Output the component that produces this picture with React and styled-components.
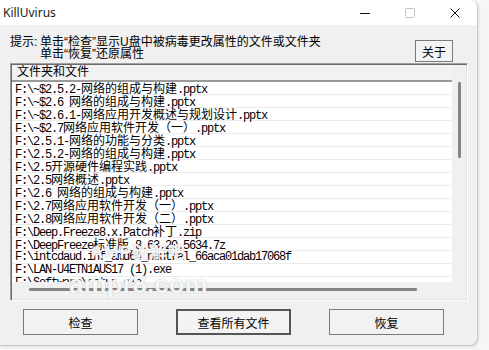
import React from 'react';
import styled, { createGlobalStyle } from 'styled-components';

const GlobalStyle = createGlobalStyle`
  html, body { margin: 0; padding: 0; background: #f6f6f6; }
  body {
    width: 489px; height: 350px; overflow: hidden;
    font-family: "Liberation Sans", "Noto Sans CJK SC", sans-serif;
  }
`;

const Window = styled.div`
  position: relative;
  width: 478px;
  height: 346px;
  box-sizing: border-box;
  background: #f0f0f0;
  border-right: 1px solid #c9c9c9;
  border-bottom: 1px solid #c9c9c9;
  border-radius: 0 8px 8px 0;
  overflow: hidden;
  display: flex;
  flex-direction: column;
  box-shadow: 1px 1px 3px rgba(0, 0, 0, 0.10);
`;

const TitleBar = styled.div`
  height: 25px;
  flex: none;
  background: #ffffff;
  display: flex;
  align-items: center;
`;

const Title = styled.div`
  flex: 1;
  padding-left: 3px;
  font-family: "Noto Sans", "Open Sans", sans-serif;
  font-size: 12px;
  color: #1a1a1a;
  line-height: 25px;
`;

const Control = styled.div`
  width: 45px;
  height: 25px;
  display: flex;
  align-items: center;
  justify-content: center;
`;

const HintRow = styled.div`
  margin-top: 11px;
  height: 27px;
  display: flex;
  justify-content: space-between;
  align-items: flex-start;
  padding: 0 24px 0 10px;
  flex: none;
`;

const Hint = styled.div`
  display: flex;
  font-size: 12px;
  line-height: 12px;
  color: #000;
`;

const HintLabel = styled.span`
  width: 30px;
  flex: none;
`;

const HintLines = styled.div`
  display: flex;
  flex-direction: column;
  white-space: nowrap;
`;

const SmallButton = styled.button`
  margin-top: 4px;
  width: 38px;
  height: 22px;
  padding: 0;
  box-sizing: border-box;
  background: #f3f3f3;
  border: 1px solid #7a7a7a;
  font-family: "Liberation Sans", "Noto Sans CJK SC", sans-serif;
  font-size: 12px;
  color: #000;
`;

const ListGroup = styled.div`
  position: relative;
  margin-left: 10px;
  width: 458px;
  height: 238px;
  box-sizing: border-box;
  flex: none;
  border-top: 1px solid #a0a0a0;
  border-left: 1px solid #a0a0a0;
  border-right: 1px solid #ffffff;
  border-bottom: 1px solid #ffffff;
  box-shadow: inset 1px 1px 0 #6a6a6a, inset -1px -1px 0 #e3e3e3;
  padding: 1px;
  display: grid;
  grid-template-columns: 1fr 14px;
  grid-template-rows: 1fr 17px;
`;

const ListMain = styled.div`
  display: flex;
  flex-direction: column;
  overflow: hidden;
  min-width: 0;
`;

const Header = styled.div`
  height: 15px;
  flex: none;
  background: #f2f2f2;
  border-bottom: 2px solid #9a9a9a;
  padding-left: 5px;
  font-size: 12px;
  line-height: 15px;
  color: #000;
  white-space: nowrap;
`;

const Rows = styled.div`
  flex: 1;
  background: #ffffff;
  overflow: hidden;
`;

const Row = styled.div`
  height: 13px;
  box-sizing: border-box;
  border-bottom: 1px solid #ececec;
  padding-left: 3px;
  font-family: "Liberation Mono", monospace;
  font-size: 12px;
  letter-spacing: -1.2px;
  line-height: 12px;
  white-space: nowrap;
  color: #000;
`;

const Cjk = styled.span`
  font-family: "Noto Sans CJK SC", sans-serif;
  font-size: 12px;
  letter-spacing: 0;
  line-height: 12px;
`;

const VScroll = styled.div`
  background: #f0f0f0;
  display: flex;
  justify-content: center;
  padding-top: 17px;
`;

const VThumb = styled.div`
  width: 3px;
  height: 76px;
  background: #858585;
  border-radius: 1px;
`;

const HScroll = styled.div`
  background: #f0f0f0;
  padding: 6px 0 0 17px;
`;

const HThumb = styled.div`
  width: 388px;
  height: 3px;
  background: #858585;
  border-radius: 1px;
`;

const Corner = styled.div`
  background: #f0f0f0;
`;

const ButtonRow = styled.div`
  margin-top: 8px;
  display: flex;
  gap: 38px;
  padding-left: 23px;
  flex: none;
`;

const Button = styled.button`
  width: 115px;
  height: 26px;
  padding: 0;
  box-sizing: border-box;
  background: ${(p) => (p.$default ? '#f3f3f3' : '#f2f2f2')};
  border: ${(p) => (p.$default ? '2px solid #555555' : '1px solid #7a7a7a')};
  font-family: "Liberation Sans", "Noto Sans CJK SC", sans-serif;
  font-size: 12px;
  color: #000;
`;

const Watermark = styled.div`
  position: absolute;
  left: 58px;
  top: 178px;
  display: flex;
  flex-direction: column;
  align-items: center;
  pointer-events: none;
  color: rgba(255, 255, 255, 0.92);
  font-family: "Liberation Sans", "Noto Sans CJK SC", sans-serif;
  font-weight: bold;
  text-shadow: 0 0 1px rgba(120, 120, 120, 0.6);
`;

const WmTop = styled.div`
  font-size: 17px;
  line-height: 22px;
  letter-spacing: 1px;
`;

const WmBottom = styled.div`
  margin-top: 6px;
  font-size: 26px;
  line-height: 28px;
`;

const files = [
  'F:\\~$2.5.2-网络的组成与构建.pptx',
  'F:\\~$2.6 网络的组成与构建.pptx',
  'F:\\~$2.6.1-网络应用开发概述与规划设计.pptx',
  'F:\\~$2.7网络应用软件开发（一）.pptx',
  'F:\\2.5.1-网络的功能与分类.pptx',
  'F:\\2.5.2-网络的组成与构建.pptx',
  'F:\\2.5开源硬件编程实践.pptx',
  'F:\\2.5网络概述.pptx',
  'F:\\2.6 网络的组成与构建.pptx',
  'F:\\2.7网络应用软件开发（一）.pptx',
  'F:\\2.8网络应用软件开发（二）.pptx',
  'F:\\Deep.Freeze8.x.Patch补丁.zip',
  'F:\\DeepFreeze标准版_8.63.20.5634.7z',
  'F:\\intcdaud.inf_amd64_neutral_66aca01dab17068f',
  'F:\\LAN-U4ETN1AUS17 (1).exe',
  'F:\\Software\\setup.exe',
];

function splitRuns(text) {
  const parts = [];
  const re = /[\u3000-\u9fff\uff00-\uffef]+/g;
  let last = 0;
  let m;
  while ((m = re.exec(text))) {
    if (m.index > last) parts.push({ cjk: false, s: text.slice(last, m.index) });
    parts.push({ cjk: true, s: m[0] });
    last = m.index + m[0].length;
  }
  if (last < text.length) parts.push({ cjk: false, s: text.slice(last) });
  return parts;
}

function FileRow({ text }) {
  return (
    <Row>
      {splitRuns(text).map((p, i) =>
        p.cjk ? <Cjk key={i}>{p.s}</Cjk> : <span key={i}>{p.s}</span>
      )}
    </Row>
  );
}

export default function App() {
  return (
    <>
      <GlobalStyle />
      <Window>
        <TitleBar>
          <Title>KillUvirus</Title>
          <Control>
            <svg width="10" height="10" viewBox="0 0 10 10">
              <line x1="0" y1="5.5" x2="10" y2="5.5" stroke="#111" strokeWidth="1" />
            </svg>
          </Control>
          <Control>
            <svg width="10" height="10" viewBox="0 0 10 10">
              <rect x="0.5" y="0.5" width="9" height="9" rx="1" fill="none" stroke="#c2c2c2" strokeWidth="1" />
            </svg>
          </Control>
          <Control>
            <svg width="10" height="10" viewBox="0 0 10 10">
              <path d="M0.5 0.5 L9.5 9.5 M9.5 0.5 L0.5 9.5" stroke="#111" strokeWidth="1" />
            </svg>
          </Control>
        </TitleBar>

        <HintRow>
          <Hint>
            <HintLabel>提示:</HintLabel>
            <HintLines>
              <span>单击“检查”显示U盘中被病毒更改属性的文件或文件夹</span>
              <span>单击“恢复”还原属性</span>
            </HintLines>
          </Hint>
          <SmallButton>关于</SmallButton>
        </HintRow>

        <ListGroup>
          <ListMain>
            <Header>文件夹和文件</Header>
            <Rows>
              {files.map((f) => (
                <FileRow key={f} text={f} />
              ))}
            </Rows>
          </ListMain>
          <VScroll>
            <VThumb />
          </VScroll>
          <HScroll>
            <HThumb />
          </HScroll>
          <Corner />
          <Watermark>
            <WmTop>AMP破解吧</WmTop>
            <WmBottom>ampr8.com</WmBottom>
          </Watermark>
        </ListGroup>

        <ButtonRow>
          <Button>检查</Button>
          <Button $default>查看所有文件</Button>
          <Button>恢复</Button>
        </ButtonRow>
      </Window>
    </>
  );
}
